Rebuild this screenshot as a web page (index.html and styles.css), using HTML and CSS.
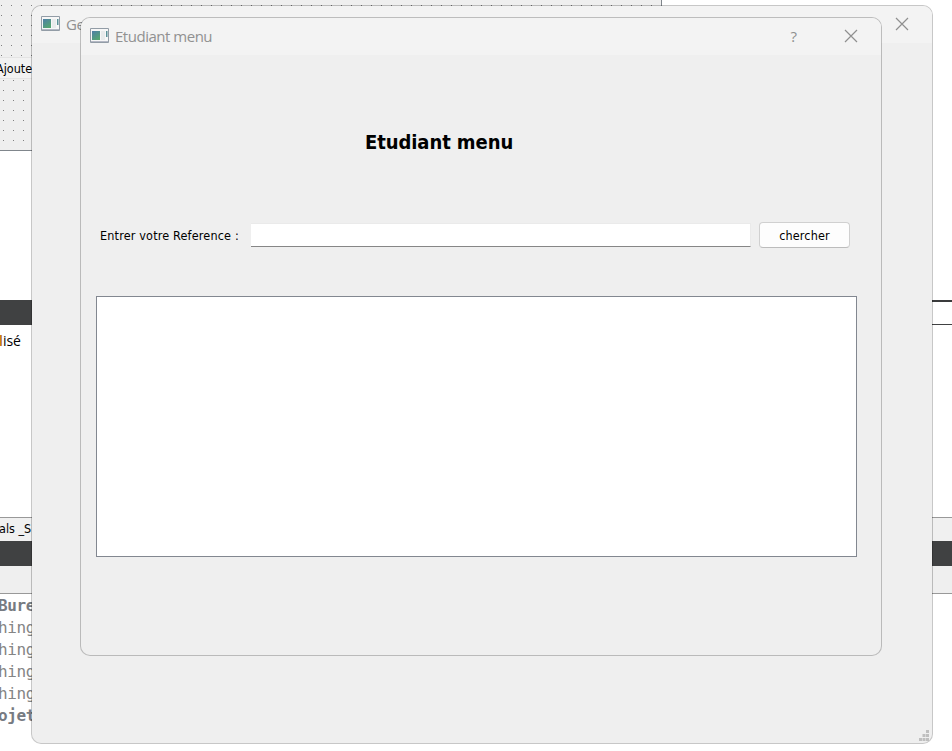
FILE: index.html
```html
<!DOCTYPE html>
<html lang="fr">
<head>
<meta charset="utf-8">
<title>Etudiant menu</title>
<link rel="stylesheet" href="styles.css">
</head>
<body>
<div class="desktop">
  <div class="designer">
    <div class="dots dots-top"></div>
    <div class="form-label"><span>Ajoute</span></div>
    <div class="dots dots-bottom"></div>
  </div>
  <div class="blank"></div>
  <div class="split"><div class="split-dark"></div><div class="split-frame"></div></div>
  <div class="editor"><span class="amber">l</span>isé</div>
  <div class="tabs">als _S</div>
  <div class="darkbar"></div>
  <div class="toolbar"></div>
  <div class="console">
    <div class="bold">Bure</div>
    <div>hing</div>
    <div>hing</div>
    <div>hing</div>
    <div>hing</div>
    <div class="bold">ojet</div>
  </div>
</div>

<section class="window back">
  <header class="titlebar">
    <svg class="app-icon" width="19" height="15" viewBox="0 0 19 15"><defs><linearGradient id="g" x1="0" y1="0" x2="0.6" y2="1"><stop offset="0" stop-color="#4f7ea8"/><stop offset="1" stop-color="#55a572"/></linearGradient></defs><path fill="#f7f7f7" stroke="#929ca6" d="M.5.5h18v14H.5z"/><path stroke="#b4b8c4" d="M1 13.5h17"/><path fill="url(#g)" d="M2 3h8v9H2z"/><path fill="#e9ebec" d="M11 3h4v9h-4z"/><path fill="#5c9299" d="M16 3h1.5v6H16z"/></svg>
    <h2 class="title">Ge</h2>
    <svg class="close" width="14" height="14" viewBox="0 0 14 14"><path d="M1 1l12 12M13 1L1 13"/></svg>
  </header>
  <svg class="grip" width="10" height="11" viewBox="0 0 10 11"><path d="M7 0h3v3H7zM3.5 4h3v3h-3zM7 4h3v3H7zM0 8h3v3H0zM3.5 8h3v3h-3zM7 8h3v3H7z"/></svg>
</section>

<section class="window front">
  <header class="titlebar">
    <svg class="app-icon" width="19" height="15" viewBox="0 0 19 15"><path fill="#f7f7f7" stroke="#929ca6" d="M.5.5h18v14H.5z"/><path stroke="#b4b8c4" d="M1 13.5h17"/><path fill="url(#g)" d="M2 3h8v9H2z"/><path fill="#e9ebec" d="M11 3h4v9h-4z"/><path fill="#5c9299" d="M16 3h1.5v6H16z"/></svg>
    <h2 class="title">Etudiant menu</h2>
    <span class="help">?</span>
    <svg class="close" width="14" height="14" viewBox="0 0 14 14"><path d="M1 1l12 12M13 1L1 13"/></svg>
  </header>
  <main class="body">
    <h1 class="heading"><span>Etudiant menu</span></h1>
    <div class="search">
      <label for="ref"><span>Entrer votre Reference :</span></label>
      <input id="ref" type="text">
      <button type="button">chercher</button>
    </div>
    <div class="results"></div>
  </main>
</section>
</body>
</html>
```

FILE: styles.css
```css
* { box-sizing: border-box; }
body {
  margin: 0;
  width: 952px;
  height: 751px;
  position: relative;
  overflow: hidden;
  background: #fff;
  color: #000;
  font: 12.5px/16px "DejaVu Sans Condensed", "DejaVu Sans", sans-serif;
  font-stretch: condensed;
}
.desktop { display: flex; flex-direction: column; height: 751px; white-space: nowrap; }
.designer {
  display: flex;
  flex-direction: column;
  width: 662px;
  height: 151px;
  background: #efefef;
  border-right: 1px solid #80868c;
  border-bottom: 1px solid #80868c;
}
.dots {
  background-image: url("data:image/svg+xml,%3Csvg xmlns='http://www.w3.org/2000/svg' width='10' height='10'%3E%3Crect width='1' height='1' fill='%23808080'/%3E%3C/svg%3E");
}
.dots-top { height: 57px; background-position: 1px 5px; }
.dots-bottom { height: 71px; background-position: 3px 1px; }
.form-label {
  height: 22px;
  line-height: 22px;
  background: #f2f2f2;
  border: solid #e4e4e4;
  border-width: 1px 0;
}
.form-label span { display: block; margin-left: -4px; }
.blank { height: 149px; }
.split { display: flex; height: 25px; }
.split-dark { width: 32px; background: #404142; }
.split-frame { flex: 1; border-top: 2px solid #3a3b3c; border-bottom: 1px solid #404142; }
.editor { height: 192px; font: 14px/32px "Open Sans", sans-serif; }
.amber { color: #b86b00; font-weight: 600; margin-left: -1px; }
.tabs { height: 24px; line-height: 22px; margin-left: -1px; background: #f0f0f0; border-top: 1px solid #999; }
.darkbar { height: 25px; background: #404142; }
.toolbar { height: 28px; background: #efefef; border-bottom: 1px solid #999; }
.console { padding-top: 1px; margin-left: -2px; color: #858585; font: 16px/22px "DejaVu Sans Mono", monospace; letter-spacing: -0.4px; }
.bold { font-weight: bold; color: #777b82; }

.window {
  position: absolute;
  background: #efefef;
  background-clip: padding-box;
  border: 1px solid rgba(0, 0, 0, 0.22);
  border-radius: 10px;
  overflow: hidden;
}
.back { left: 31px; top: 5px; width: 902px; height: 739px; }
.front { left: 80px; top: 17px; width: 802px; height: 639px; }
.titlebar {
  display: flex;
  align-items: center;
  height: 37px;
  padding: 0 23px 0 9px;
  background: #f3f3f3;
}
.app-icon { flex: none; margin-top: -2px; }
.title {
  flex: 1;
  margin: -1px 0 0 6px;
  color: #919191;
  font: 15px/20px "Open Sans", sans-serif;
  letter-spacing: -0.48px;
}
.help { margin: -2px 47px 0 0; color: #8f8f8f; font: 15px/20px "Open Sans", sans-serif; }
.close { margin-top: -2px; fill: none; stroke: #8f8f8f; stroke-width: 1.2; }
.grip { position: absolute; right: 3px; bottom: 2px; fill: #bfbfbf; }
.body { display: flex; flex-direction: column; padding: 71px 24px 0 15px; }
.heading {
  height: 32px;
  margin: 0 0 64px 269px;
  font: bold 20px/32px "DejaVu Sans Condensed", "DejaVu Sans", sans-serif;
  font-stretch: condensed;
  letter-spacing: -0.08px;
}
.search { display: flex; align-items: center; height: 26px; margin-right: 7px; }
.search label { width: 151px; padding: 1px 0 0 4px; margin-right: 4px; white-space: nowrap; letter-spacing: 0.17px; }
.search input {
  flex: 1;
  min-width: 0;
  height: 24px;
  padding: 0 4px;
  font: inherit;
  background: #fff;
  border: 0 solid #eaeaea;
  border-width: 1px 1px 1px 0;
  border-bottom-color: #868686;
  outline: 0;
}
.search button {
  width: 91px;
  height: 26px;
  margin-left: 8px;
  padding: 1px 0 0;
  font: inherit;
  letter-spacing: 0.15px;
  color: #000;
  background: #fdfdfd;
  border: 1px solid #d0d0d0;
  border-bottom-color: #bcbcbc;
  border-radius: 4px;
}
.results { height: 261px; margin-top: 48px; background: #fff; border: 1px solid #828790; }
```
